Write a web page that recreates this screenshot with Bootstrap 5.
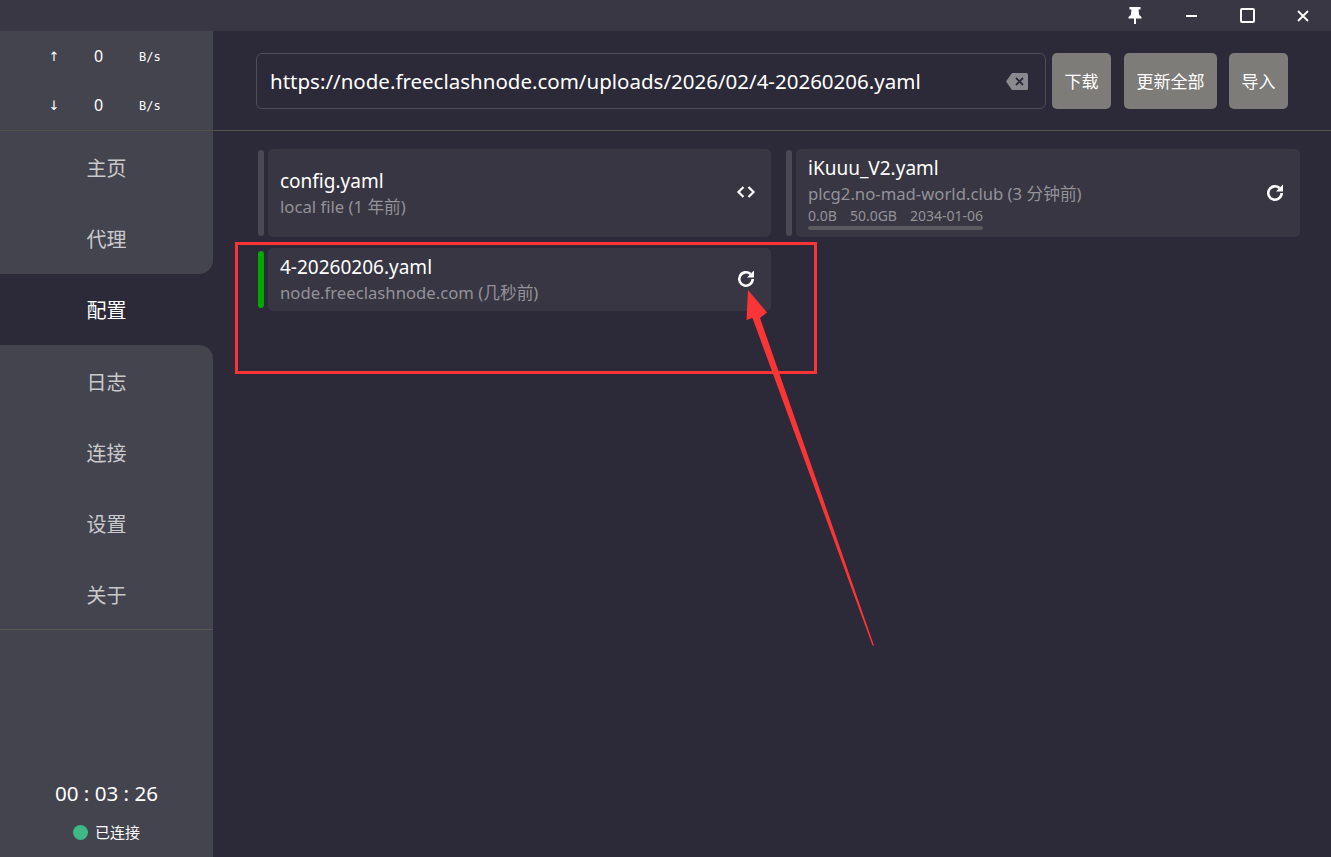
<!DOCTYPE html>
<html lang="zh">
<head>
<meta charset="utf-8">
<title>Clash</title>
<link href="https://cdn.jsdelivr.net/npm/bootstrap@5.3.0/dist/css/bootstrap.min.css" rel="stylesheet">
<style>
html,body{height:100%;margin:0;overflow:hidden;background:#2c2a38;font-family:"Noto Sans","Noto Sans CJK SC",sans-serif;color:#fff}
.app{height:857px;width:1331px;position:relative}
.titlebar{height:31px;background:#383743}
.winbtn{width:56px;height:31px;display:flex;align-items:center;justify-content:center}
.shell{height:826px}
.side{width:213px;background:#2c2a38;flex:none}
.speed{height:100px;background:#44444f;border-bottom:1px solid #555050;padding-top:0}
.speedrow{height:49px;display:flex;align-items:center;font-size:16px;line-height:1}
.speedrow .ar{width:20px;margin-left:44px;text-align:center;font-size:13px;font-family:"DejaVu Sans",sans-serif;padding-top:2px;color:#fff}
.speedrow .num{width:68px;text-align:center;padding-left:1px}
.speedrow .unit{width:40px;margin-left:7px;font-family:"DejaVu Sans Mono","Liberation Mono",monospace;font-size:12px;padding-top:2px}
.navtop{background:#44444f;height:143px;border-bottom-right-radius:14px}
.navbot{background:#44444f;flex:1;border-top-right-radius:14px;display:flex;flex-direction:column}
.navitem{height:71px;display:flex;align-items:center;justify-content:center;font-size:20px;color:#c9c9cc;padding-top:5px}
.navactive{height:71px;display:flex;align-items:center;justify-content:center;font-size:20px;color:#fff;background:#2c2a38;padding-top:3px}
.navlist{height:285px;border-bottom:1px solid #5a5656}
.timer{font-size:20.6px;line-height:1;margin-top:153px;text-align:center}
.connected{font-size:15px;margin-top:21px;line-height:1;gap:7px}
.dot{width:15px;height:15px;border-radius:50%;background:#3eb884;display:inline-block}
.mainpane{flex:1;min-width:0}
.topbar{height:100px;border-bottom:1px solid #565250;padding:22px 43px 0 43px}
.urlbox{width:790px;height:56px;border:1px solid #4f4d58;border-radius:6px;padding:0 16px 0 13px;font-size:20.5px;color:#fff}
.urltext{flex:1;white-space:nowrap}
.actbtn{height:56px;background:#7d7c78;color:#fff;border:0;border-radius:5px;font-size:17px;display:flex;align-items:center;justify-content:center;padding:2px 0 0}
.bw1{width:59px;margin-left:6px}
.bw2{width:93px;margin-left:13px}
.bw3{width:59px;margin-left:12px}
.profiles{padding:18px 31px 0 45px}
.profrow{display:flex;margin-bottom:11px}
.profcell{width:513px;display:flex;margin-right:15px}
.profcell2{width:514px;margin-right:0}
.stripe{width:6px;background:#4a4954;border-radius:3px;margin:1px 4px 1px 0;flex:none}
.stripeon{background:#00a800;margin:3px 4px 3px 0}
.profcard{flex:1;background:#383643;border-radius:5px;display:flex;align-items:center;padding:0 12px;min-width:0}
.h88{height:88px}
.h63{height:63px}
.pname{font-size:19px;line-height:25px;color:#fff;padding-top:1px}
.psub{font-size:16.7px;line-height:26px;color:#939298}
.pmeta{font-size:14px;line-height:17px;color:#939298;display:flex;gap:13px}
.pbar{width:175px;height:4px;background:#5b5a5e;border-radius:2px;margin-top:2px}
.pinfo{flex:1;min-width:0}
.pdown{margin-top:1px}
.pup{margin-top:-1px}
.picon{width:22px;height:22px;flex:none;margin-right:2px;margin-top:-2px}
.picon2{margin-right:2px;margin-top:-1px}
.notes{position:absolute;left:0;top:0;pointer-events:none}
</style>
</head>
<body>
<div class="app">
  <div class="titlebar d-flex justify-content-end">
    <div class="winbtn"><svg width="14" height="17" viewBox="0 0 14 17"><path fill="#fff" d="M1.500 0h11v2.500h-2l.7 5.500 2.300 2v1.500H8v5.500H6v-5.500H.5V10l2.300-2 .7-5.500h-2z"/></svg></div>
    <div class="winbtn"><svg width="11" height="2" viewBox="0 0 11 2"><rect width="11" height="2" fill="#fff"/></svg></div>
    <div class="winbtn"><svg width="15" height="15" viewBox="0 0 15 15"><rect x="1" y="1" width="13" height="13" rx="1" fill="none" stroke="#fff" stroke-width="2"/></svg></div>
    <div class="winbtn"><svg width="12" height="12" viewBox="0 0 12 12"><path d="M1 1l10 10M11 1L1 11" stroke="#fff" stroke-width="1.800"/></svg></div>
  </div>
  <div class="shell d-flex">
    <aside class="side d-flex flex-column">
      <div class="speed">
        <div class="speedrow"><span class="ar">↑</span><span class="num">0</span><span class="unit">B/s</span></div>
        <div class="speedrow"><span class="ar">↓</span><span class="num">0</span><span class="unit">B/s</span></div>
      </div>
      <div class="navtop">
        <div class="navitem">主页</div>
        <div class="navitem">代理</div>
      </div>
      <div class="navactive">配置</div>
      <div class="navbot">
        <div class="navlist">
          <div class="navitem">日志</div>
          <div class="navitem">连接</div>
          <div class="navitem">设置</div>
          <div class="navitem">关于</div>
        </div>
        <div class="timer">00 : 03 : 26</div>
        <div class="connected d-flex align-items-center justify-content-center"><span class="dot"></span><span>已连接</span></div>
      </div>
    </aside>
    <main class="mainpane">
      <div class="topbar d-flex">
        <div class="urlbox d-flex align-items-center">
          <span class="urltext">https://node.freeclashnode.com/uploads/2026/02/4-20260206.yaml</span>
          <svg width="24" height="19" viewBox="0 0 24 19"><path fill="#8a8a8e" d="M7 1h14.500a1.500 1.500 0 0 1 1.500 1.500v14a1.500 1.500 0 0 1-1.500 1.500H7L1 9.500z"/><path d="M11 6l7 7M18 6l-7 7" stroke="#2c2a38" stroke-width="1.800"/></svg>
        </div>
        <button class="actbtn bw1">下载</button>
        <button class="actbtn bw2">更新全部</button>
        <button class="actbtn bw3">导入</button>
      </div>
      <div class="profiles">
        <div class="profrow">
          <div class="profcell">
            <div class="stripe"></div>
            <div class="profcard h88">
              <div class="pinfo pdown"><div class="pname">config.yaml</div><div class="psub">local file (1 年前)</div></div>
              <svg class="picon" viewBox="0 0 22 22"><path d="M8.500 6l-5 5 5 5M13.500 6l5 5-5 5" fill="none" stroke="#fff" stroke-width="2.200"/></svg>
            </div>
          </div>
          <div class="profcell profcell2">
            <div class="stripe"></div>
            <div class="profcard h88">
              <div class="pinfo pup">
                <div class="pname">iKuuu_V2.yaml</div>
                <div class="psub">plcg2.no-mad-world.club (3 分钟前)</div>
                <div class="pmeta"><span>0.0B</span><span>50.0GB</span><span>2034-01-06</span></div>
                <div class="pbar"></div>
              </div>
              <svg class="picon picon2" viewBox="0 0 22 22"><path d="M17.700 11a6.700 6.700 0 1 1-2.200-5" fill="none" stroke="#fff" stroke-width="2.600"/><path d="M19 2.500v7h-7z" fill="#fff"/></svg>
            </div>
          </div>
        </div>
        <div class="profrow">
          <div class="profcell">
            <div class="stripe stripeon"></div>
            <div class="profcard h63">
              <div class="pinfo pdown"><div class="pname">4-20260206.yaml</div><div class="psub">node.freeclashnode.com (几秒前)</div></div>
              <svg class="picon" viewBox="0 0 22 22"><path d="M17.700 11a6.700 6.700 0 1 1-2.200-5" fill="none" stroke="#fff" stroke-width="2.600"/><path d="M19 2.500v7h-7z" fill="#fff"/></svg>
            </div>
          </div>
        </div>
      </div>
    </main>
  </div>
  <svg class="notes" width="1331" height="857" viewBox="0 0 1331 857">
    <rect x="236.500" y="243.500" width="579" height="129" fill="none" stroke="#fb3535" stroke-width="3"/>
    <path fill="#fb3535" d="M874 645.500L872.500 645.500 752.500 318 746.500 320 748 290 767 312.500 760 318z"/>
  </svg>
</div>
<script src="https://cdn.jsdelivr.net/npm/bootstrap@5.3.0/dist/js/bootstrap.bundle.min.js"></script>
</body>
</html>
